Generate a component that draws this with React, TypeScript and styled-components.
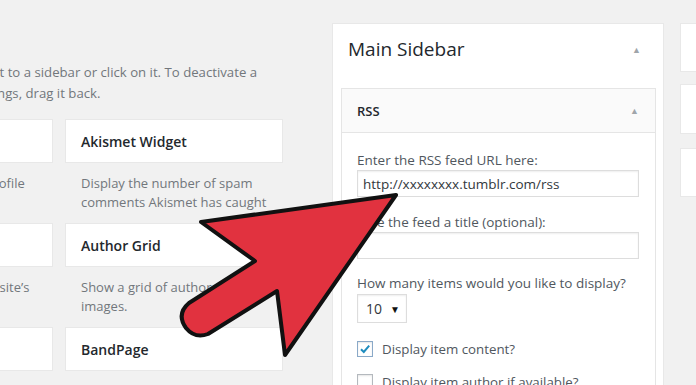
import React from "react";
import styled, { createGlobalStyle } from "styled-components";

const GlobalStyle = createGlobalStyle`
  html, body {
    margin: 0;
    padding: 0;
  }
  body {
    background: #f1f1f1;
    font-family: "Open Sans", "Liberation Sans", sans-serif;
    width: 696px;
    height: 385px;
    overflow: hidden;
  }
`;

const Page = styled.div`
  position: relative;
  display: flex;
  width: 696px;
  height: 385px;
  overflow: hidden;
`;

const LeftArea = styled.section`
  flex: 0 0 332px;
`;

const LeftInner = styled.div`
  margin-left: -165px;
  padding-top: 62px;
`;

const Intro = styled.p`
  margin: 0 0 15px 5px;
  font-size: 13.2px;
  line-height: 21px;
  color: #72777c;
  white-space: nowrap;
`;

const WidgetGrid = styled.div`
  display: grid;
  grid-template-columns: 218px 218px;
  column-gap: 12px;
`;

const WidgetItem = styled.div`
  height: 104px;
`;

const WidgetCard = styled.div`
  box-sizing: border-box;
  height: 44px;
  display: flex;
  align-items: center;
  padding: 0 15px;
  background: #fff;
  border: 1px solid #e8e8e8;
  font-size: 14px;
  font-weight: 600;
  color: #23282d;
`;

const WidgetDesc = styled.p`
  margin: 0;
  padding: 11px 16px 0;
  font-size: 13px;
  line-height: 19px;
  color: #72777c;
`;

const Panel = styled.section`
  flex: 0 0 332px;
  box-sizing: border-box;
  margin-top: 23px;
  background: #fff;
  border: 1px solid #e8e8e8;
  border-bottom: none;
`;

const PanelHeader = styled.div`
  height: 50px;
  display: flex;
  align-items: center;
  justify-content: space-between;
  padding: 0 22px 0 15px;
`;

const PanelTitle = styled.h2`
  margin: 0;
  font-size: 19px;
  font-weight: 400;
  color: #23282d;
`;

const Toggle = styled.span`
  font-size: 9px;
  color: #a0a5aa;
  line-height: 1;
`;

const RssBox = styled.div`
  margin: 14px 7px 0 8px;
`;

const RssHeader = styled.div`
  box-sizing: border-box;
  height: 45px;
  display: flex;
  align-items: center;
  justify-content: space-between;
  padding: 0 16px 0 15px;
  background: #fafafa;
  border: 1px solid #e5e5e5;
`;

const RssTitle = styled.h3`
  margin: 0;
  font-size: 13px;
  font-weight: 600;
  color: #23282d;
`;

const RssBody = styled.div`
  padding: 18px 15px 20px;
  background: #fff;
  border: 1px solid #e5e5e5;
  border-top: none;
`;

const Field = styled.div<{ gap?: number }>`
  margin-top: ${(p) => p.gap ?? 0}px;
`;

const Label = styled.label`
  display: block;
  font-size: 13.5px;
  line-height: 18px;
  color: #50575e;
`;

const TextInput = styled.div`
  box-sizing: border-box;
  width: 282px;
  height: 27px;
  margin-top: 1px;
  padding: 0 5px;
  display: flex;
  align-items: center;
  border: 1px solid #dddddd;
  box-shadow: inset 0 1px 2px rgba(0, 0, 0, 0.07);
  font-size: 13.5px;
  color: #32373c;
`;

const SelectBox = styled.div`
  box-sizing: border-box;
  width: 50px;
  height: 29px;
  margin-top: 2px;
  padding: 0 6px 0 8px;
  display: flex;
  align-items: center;
  justify-content: space-between;
  border: 1px solid #dddddd;
  box-shadow: inset 0 1px 2px rgba(0, 0, 0, 0.07);
  font-size: 14px;
  color: #32373c;
`;

const Caret = styled.span`
  font-size: 10px;
  color: #111;
`;

const CheckRow = styled.div<{ gap: number }>`
  margin-top: ${(p) => p.gap}px;
  display: flex;
  align-items: center;
  gap: 9px;
  font-size: 13.3px;
  line-height: 18px;
  color: #50575e;
`;

const CheckBox = styled.span<{ checked?: boolean }>`
  box-sizing: border-box;
  width: 16px;
  height: 16px;
  display: flex;
  align-items: center;
  justify-content: center;
  border: 1px solid ${(p) => (p.checked ? "#8aa9c8" : "#b4b9be")};
  box-shadow: inset 0 1px 2px rgba(0, 0, 0, 0.1);
  background: #fff;
`;

const RightColumn = styled.aside`
  flex: 0 0 300px;
  margin: 23px 0 0 16px;
`;

const SideCard = styled.div<{ h: number; gap: number }>`
  box-sizing: border-box;
  height: ${(p) => p.h}px;
  margin-bottom: ${(p) => p.gap}px;
  background: #fff;
  border: 1px solid #e8e8e8;
`;

const Overlay = styled.svg`
  position: absolute;
  left: 0;
  top: 0;
  pointer-events: none;
`;

type Widget = { title: string; desc: string };

const widgets: Widget[] = [
  { title: "Gravatar Profile", desc: "Display your Gravatar profile" },
  { title: "Akismet Widget", desc: "Display the number of spam comments Akismet has caught" },
  { title: "Authors", desc: "Displays a list of all your site’s authors." },
  { title: "Author Grid", desc: "Show a grid of author avatar images." },
  { title: "Archives", desc: "A monthly archive of your site’s Posts." },
  { title: "BandPage", desc: "Display your BandPage tour dates." },
];

const Check = () => (
  <svg width="12" height="12" viewBox="0 0 12 12">
    <path d="M2 6.2 L4.8 9 L10.2 2.6" fill="none" stroke="#1e8cbe" strokeWidth="2" />
  </svg>
);

export default function App() {
  return (
    <>
      <GlobalStyle />
      <Page>
        <LeftArea>
          <LeftInner>
            <Intro>
              To activate a widget drag it to a sidebar or click on it. To deactivate a
              <br />
              widget and delete its settings, drag it back.
            </Intro>
            <WidgetGrid>
              {widgets.map((w) => (
                <WidgetItem key={w.title}>
                  <WidgetCard>{w.title}</WidgetCard>
                  <WidgetDesc>{w.desc}</WidgetDesc>
                </WidgetItem>
              ))}
            </WidgetGrid>
          </LeftInner>
        </LeftArea>

        <Panel>
          <PanelHeader>
            <PanelTitle>Main Sidebar</PanelTitle>
            <Toggle>▲</Toggle>
          </PanelHeader>
          <RssBox>
            <RssHeader>
              <RssTitle>RSS</RssTitle>
              <Toggle>▲</Toggle>
            </RssHeader>
            <RssBody>
              <Field>
                <Label>Enter the RSS feed URL here:</Label>
                <TextInput>http://xxxxxxxx.tumblr.com/rss</TextInput>
              </Field>
              <Field gap={16}>
                <Label>Give the feed a title (optional):</Label>
                <TextInput />
              </Field>
              <Field gap={15}>
                <Label>How many items would you like to display?</Label>
                <SelectBox>
                  10 <Caret>▼</Caret>
                </SelectBox>
              </Field>
              <CheckRow gap={17}>
                <CheckBox checked>
                  <Check />
                </CheckBox>
                Display item content?
              </CheckRow>
              <CheckRow gap={15}>
                <CheckBox />
                Display item author if available?
              </CheckRow>
            </RssBody>
          </RssBox>
        </Panel>

        <RightColumn>
          <SideCard h={49} gap={12} />
          <SideCard h={50} gap={14} />
          <SideCard h={49} gap={0} />
        </RightColumn>

        <Overlay width="696" height="385" viewBox="0 0 696 385">
          <path
            d="M396 195 L201 222 L255 261 L189 303 Q176 314 186 328 Q195 339 208 334 L277 291 L285 355 Z"
            fill="#e1323f"
            stroke="#111"
            strokeWidth="4"
            strokeLinejoin="round"
          />
        </Overlay>
      </Page>
    </>
  );
}
